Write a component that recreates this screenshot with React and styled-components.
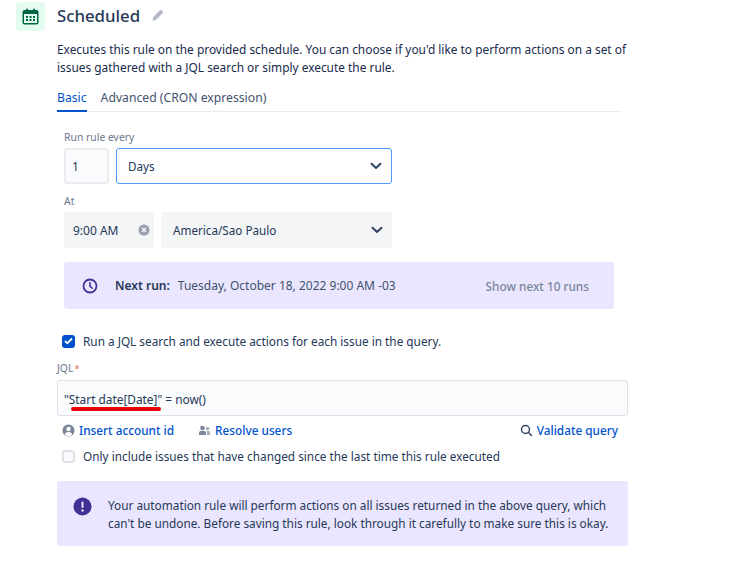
import React from "react";
import styled, { createGlobalStyle } from "styled-components";

const Global = createGlobalStyle`
  html, body { margin: 0; padding: 0; background: #fff; }
  body { font-family: "Noto Sans", "Open Sans", sans-serif; color: #172b4d; }
  * { box-sizing: border-box; }
`;

const Page = styled.div`
  width: 749px;
  height: 562px;
  padding: 2px 121px 0 16px;
  overflow: hidden;
`;

const Header = styled.header`
  display: flex;
  align-items: center;
  height: 29px;
`;

const IconTile = styled.div`
  width: 29px;
  height: 29px;
  border-radius: 3px;
  background: #e3fcef;
  display: flex;
  align-items: center;
  justify-content: center;
`;

const Title = styled.h1`
  margin: -2px 0 0 12px;
  font-size: 16.8px;
  font-weight: 500;
  line-height: 28px;
  color: #253858;
`;

const Pencil = styled.svg`
  margin: -2px 0 0 11px;
  width: 13px;
  height: 13px;
`;

const Body = styled.div`
  margin: 0 0 0 41px;
  display: flex;
  flex-direction: column;
`;

const Description = styled.p`
  margin: 9px 0 0;
  font-size: 11.9px;
  line-height: 18px;
  width: 575px;
  color: #172b4d;
`;

const Tabs = styled.nav`
  display: flex;
  gap: 14px;
  margin-top: 11px;
  height: 25px;
  width: 564px;
  border-bottom: 1px solid #ebecf0;
`;

const Tab = styled.span`
  font-size: 12.2px;
  line-height: 18px;
  height: 25px;
  padding-top: 2px;
  color: ${(p) => (p.$active ? "#0052cc" : "#42526e")};
  border-bottom: ${(p) => (p.$active ? "2px solid #0052cc" : "none")};
`;

const Schedule = styled.section`
  margin: 18px 0 0 7px;
  display: flex;
  flex-direction: column;
`;

const FieldLabel = styled.label`
  display: block;
  font-size: 10.4px;
  line-height: 14px;
  color: #6b778c;
`;

const Row = styled.div`
  display: flex;
  gap: 7px;
  margin-top: 4px;
  width: 328px;
`;

const Field = styled.div`
  height: 36px;
  width: ${(p) => (p.$width ? `${p.$width}px` : "auto")};
  flex: ${(p) => (p.$width ? "none" : 1)};
  display: flex;
  align-items: center;
  justify-content: space-between;
  border-radius: 3px;
  font-size: ${(p) => p.$size || 11.7}px;
  color: #253858;
  background: ${(p) => (p.$focus ? "#fff" : p.$plain ? "#fafbfc" : "#f4f5f7")};
  border: ${(p) =>
    p.$focus ? "1px solid #4c9aff" : p.$plain ? "2px solid #ebecf0" : "none"};
  padding: ${(p) => p.$pad || "0 8px 0 11px"};
`;

const AtLabel = styled(FieldLabel)`
  margin-top: 10px;
`;

const Banner = styled.div`
  background: #eae6ff;
  border-radius: 3px;
`;

const NextRun = styled(Banner)`
  margin-top: 14px;
  width: 550px;
  height: 47px;
  display: flex;
  align-items: center;
  padding: 0 25px 0 18px;
  font-size: 12px;
`;

const NextRunLabel = styled.strong`
  margin-left: 17px;
  font-weight: 600;
  color: #253858;
`;

const NextRunValue = styled.span`
  margin-left: 8px;
  font-size: 12px;
  color: #42526e;
`;

const ShowRuns = styled.span`
  margin-left: auto;
  font-weight: 500;
  font-size: 11.8px;
  color: #7a869a;
`;

const CheckRow = styled.div`
  display: flex;
  align-items: center;
  gap: 8px;
  font-size: 11.8px;
  line-height: 18px;
  color: #253858;
  margin: ${(p) => p.$margin};
`;

const Box = styled.span`
  width: 13px;
  height: 13px;
  flex: none;
  border-radius: 3px;
  display: flex;
  align-items: center;
  justify-content: center;
  background: ${(p) => (p.$on ? "#0052cc" : "#fafbfc")};
  border: ${(p) => (p.$on ? "none" : "2px solid #dfe1e6")};
`;

const JqlLabel = styled(FieldLabel)`
  margin-top: 11px;
`;

const Required = styled.span`
  color: #e5684a;
  font-size: 9px;
  margin-left: 1px;
`;

const JqlInput = styled.div`
  position: relative;
  margin-top: 4px;
  width: 571px;
  height: 36px;
  border: 1px solid #dfe1e6;
  border-radius: 3px;
  background: #fafbfc;
  display: flex;
  align-items: center;
  padding: 2px 6px 0;
  font-size: 11.85px;
  color: #253858;
`;

const RedMark = styled.span`
  position: absolute;
  left: 13px;
  bottom: 4px;
  width: 90px;
  height: 4px;
  border-radius: 2px;
  background: #e8000b;
`;

const Links = styled.div`
  display: flex;
  align-items: center;
  width: 556px;
  margin: 6px 0 0 5px;
  height: 16px;
`;

const LinkItem = styled.span`
  display: inline-flex;
  align-items: center;
  gap: 4px;
  font-size: 11.8px;
  font-weight: 500;
  color: #0052cc;
  margin-right: ${(p) => p.$gap || 0}px;
  margin-left: ${(p) => (p.$end ? "auto" : 0)};
`;

const Warning = styled(Banner)`
  margin-top: 16px;
  width: 571px;
  height: 65px;
  display: flex;
  padding: 15px 8px 0 16px;
  gap: 16px;
`;

const WarningIcon = styled.svg`
  flex: none;
  width: 19px;
  height: 19px;
  margin-top: 1px;
`;

const WarningText = styled.p`
  margin: 0;
  font-size: 11.8px;
  line-height: 18px;
  color: #253858;
`;

const Chevron = () => (
  <svg width="14" height="14" viewBox="0 0 14 14">
    <path d="M2.500 4.700 7 9l4.500-4.300" fill="none" stroke="#344563" strokeWidth="2" strokeLinecap="round" strokeLinejoin="round" />
  </svg>
);

export default function App() {
  return (
    <Page>
      <Global />
      <Header>
        <IconTile>
          <svg width="17" height="17" viewBox="0 0 17 17">
            <rect x="4" y="0.500" width="2" height="3" rx="1" fill="#006644" />
            <rect x="11" y="0.500" width="2" height="3" rx="1" fill="#006644" />
            <rect x="0.500" y="2" width="16" height="14.500" rx="2" fill="#006644" />
            <rect x="2" y="6" width="13" height="9" fill="#e3fcef" />
            <rect x="4" y="8" width="2" height="2" fill="#006644" />
            <rect x="7.500" y="8" width="2" height="2" fill="#006644" />
            <rect x="11" y="8" width="2" height="2" fill="#006644" />
            <rect x="4" y="11" width="2" height="2" fill="#006644" />
            <rect x="7.500" y="11" width="2" height="2" fill="#006644" />
            <rect x="11" y="11" width="2" height="2" fill="#006644" />
          </svg>
        </IconTile>
        <Title>Scheduled</Title>
        <Pencil viewBox="0 0 13 13">
          <path d="M9 1.200a1 1 0 0 1 1.400 0l1.400 1.400a1 1 0 0 1 0 1.400L5 11 1.500 11.800 2.200 8z" fill="#b3bac5" />
        </Pencil>
      </Header>
      <Body>
        <Description>
          Executes this rule on the provided schedule. You can choose if you'd like to perform actions on a set of issues gathered with a JQL search or simply execute the rule.
        </Description>
        <Tabs>
          <Tab $active>Basic</Tab>
          <Tab>Advanced (CRON expression)</Tab>
        </Tabs>
        <Schedule>
          <FieldLabel>Run rule every</FieldLabel>
          <Row>
            <Field $width={45} $plain $pad="0 6px" $size={12}>1</Field>
            <Field $focus>
              Days
              <Chevron />
            </Field>
          </Row>
          <AtLabel>At</AtLabel>
          <Row>
            <Field $width={90} $pad="0 4px 0 9px" $size={12}>
              9:00 AM
              <svg width="12" height="12" viewBox="0 0 12 12">
                <circle cx="6" cy="6" r="5.500" fill="#97a0af" />
                <path d="m4 4 4 4M8 4l-4 4" stroke="#f4f5f7" strokeWidth="1.500" />
              </svg>
            </Field>
            <Field $pad="0 8px 0 12px">
              America/Sao Paulo
              <Chevron />
            </Field>
          </Row>
          <NextRun>
            <svg width="16" height="16" viewBox="0 0 16 16">
              <circle cx="8" cy="8" r="6.500" fill="none" stroke="#403294" strokeWidth="1.800" />
              <path d="M8 4.500V8.300l2.300 2" fill="none" stroke="#403294" strokeWidth="1.500" strokeLinecap="round" />
            </svg>
            <NextRunLabel>Next run:</NextRunLabel>
            <NextRunValue>Tuesday, October 18, 2022 9:00 AM -03</NextRunValue>
            <ShowRuns>Show next 10 runs</ShowRuns>
          </NextRun>
        </Schedule>
        <CheckRow $margin="23px 0 0 5px">
          <Box $on>
            <svg width="9" height="8" viewBox="0 0 9 8">
              <path d="m1 4 2.300 2.300L8 1.500" fill="none" stroke="#fff" strokeWidth="1.800" />
            </svg>
          </Box>
          Run a JQL search and execute actions for each issue in the query.
        </CheckRow>
        <JqlLabel>
          JQL<Required>*</Required>
        </JqlLabel>
        <JqlInput>
          "Start date[Date]" = now()
          <RedMark />
        </JqlInput>
        <Links>
          <LinkItem $gap={24}>
            <svg width="13" height="13" viewBox="0 0 13 13">
              <circle cx="6.500" cy="6.500" r="6" fill="#7a869a" />
              <circle cx="6.500" cy="5" r="2.200" fill="#fff" />
              <path d="M2.800 10.500c.6-2 2-2.600 3.700-2.600s3.100.6 3.700 2.600a5 5 0 0 1-7.400 0z" fill="#fff" />
            </svg>
            Insert account id
          </LinkItem>
          <LinkItem>
            <svg width="13" height="13" viewBox="0 0 13 13">
              <circle cx="4.500" cy="4" r="2.300" fill="#7a869a" />
              <circle cx="9.500" cy="4.500" r="1.800" fill="#a5adba" />
              <path d="M1 11V9c0-1.500 1-2.300 3.500-2.300S8 7.500 8 9v2z" fill="#7a869a" />
              <path d="M9 11V8.500c0-.8-.2-1.300-.6-1.800 2.500-.3 3.600.6 3.600 2.100V11z" fill="#a5adba" />
            </svg>
            Resolve users
          </LinkItem>
          <LinkItem $end>
            <svg width="13" height="13" viewBox="0 0 13 13">
              <circle cx="5.500" cy="5.500" r="4" fill="none" stroke="#344563" strokeWidth="1.500" />
              <path d="m8.500 8.500 3 3" stroke="#344563" strokeWidth="1.500" strokeLinecap="round" />
            </svg>
            Validate query
          </LinkItem>
        </Links>
        <CheckRow $margin="9px 0 0 5px">
          <Box />
          Only include issues that have changed since the last time this rule executed
        </CheckRow>
        <Warning>
          <WarningIcon viewBox="0 0 19 19">
            <circle cx="9.500" cy="9.500" r="9" fill="#403294" />
            <rect x="8.500" y="4.500" width="2" height="6.500" rx="1" fill="#eae6ff" />
            <circle cx="9.500" cy="13.500" r="1.200" fill="#eae6ff" />
          </WarningIcon>
          <WarningText>
            Your automation rule will perform actions on all issues returned in the above query, which can't be undone. Before saving this rule, look through it carefully to make sure this is okay.
          </WarningText>
        </Warning>
      </Body>
    </Page>
  );
}
